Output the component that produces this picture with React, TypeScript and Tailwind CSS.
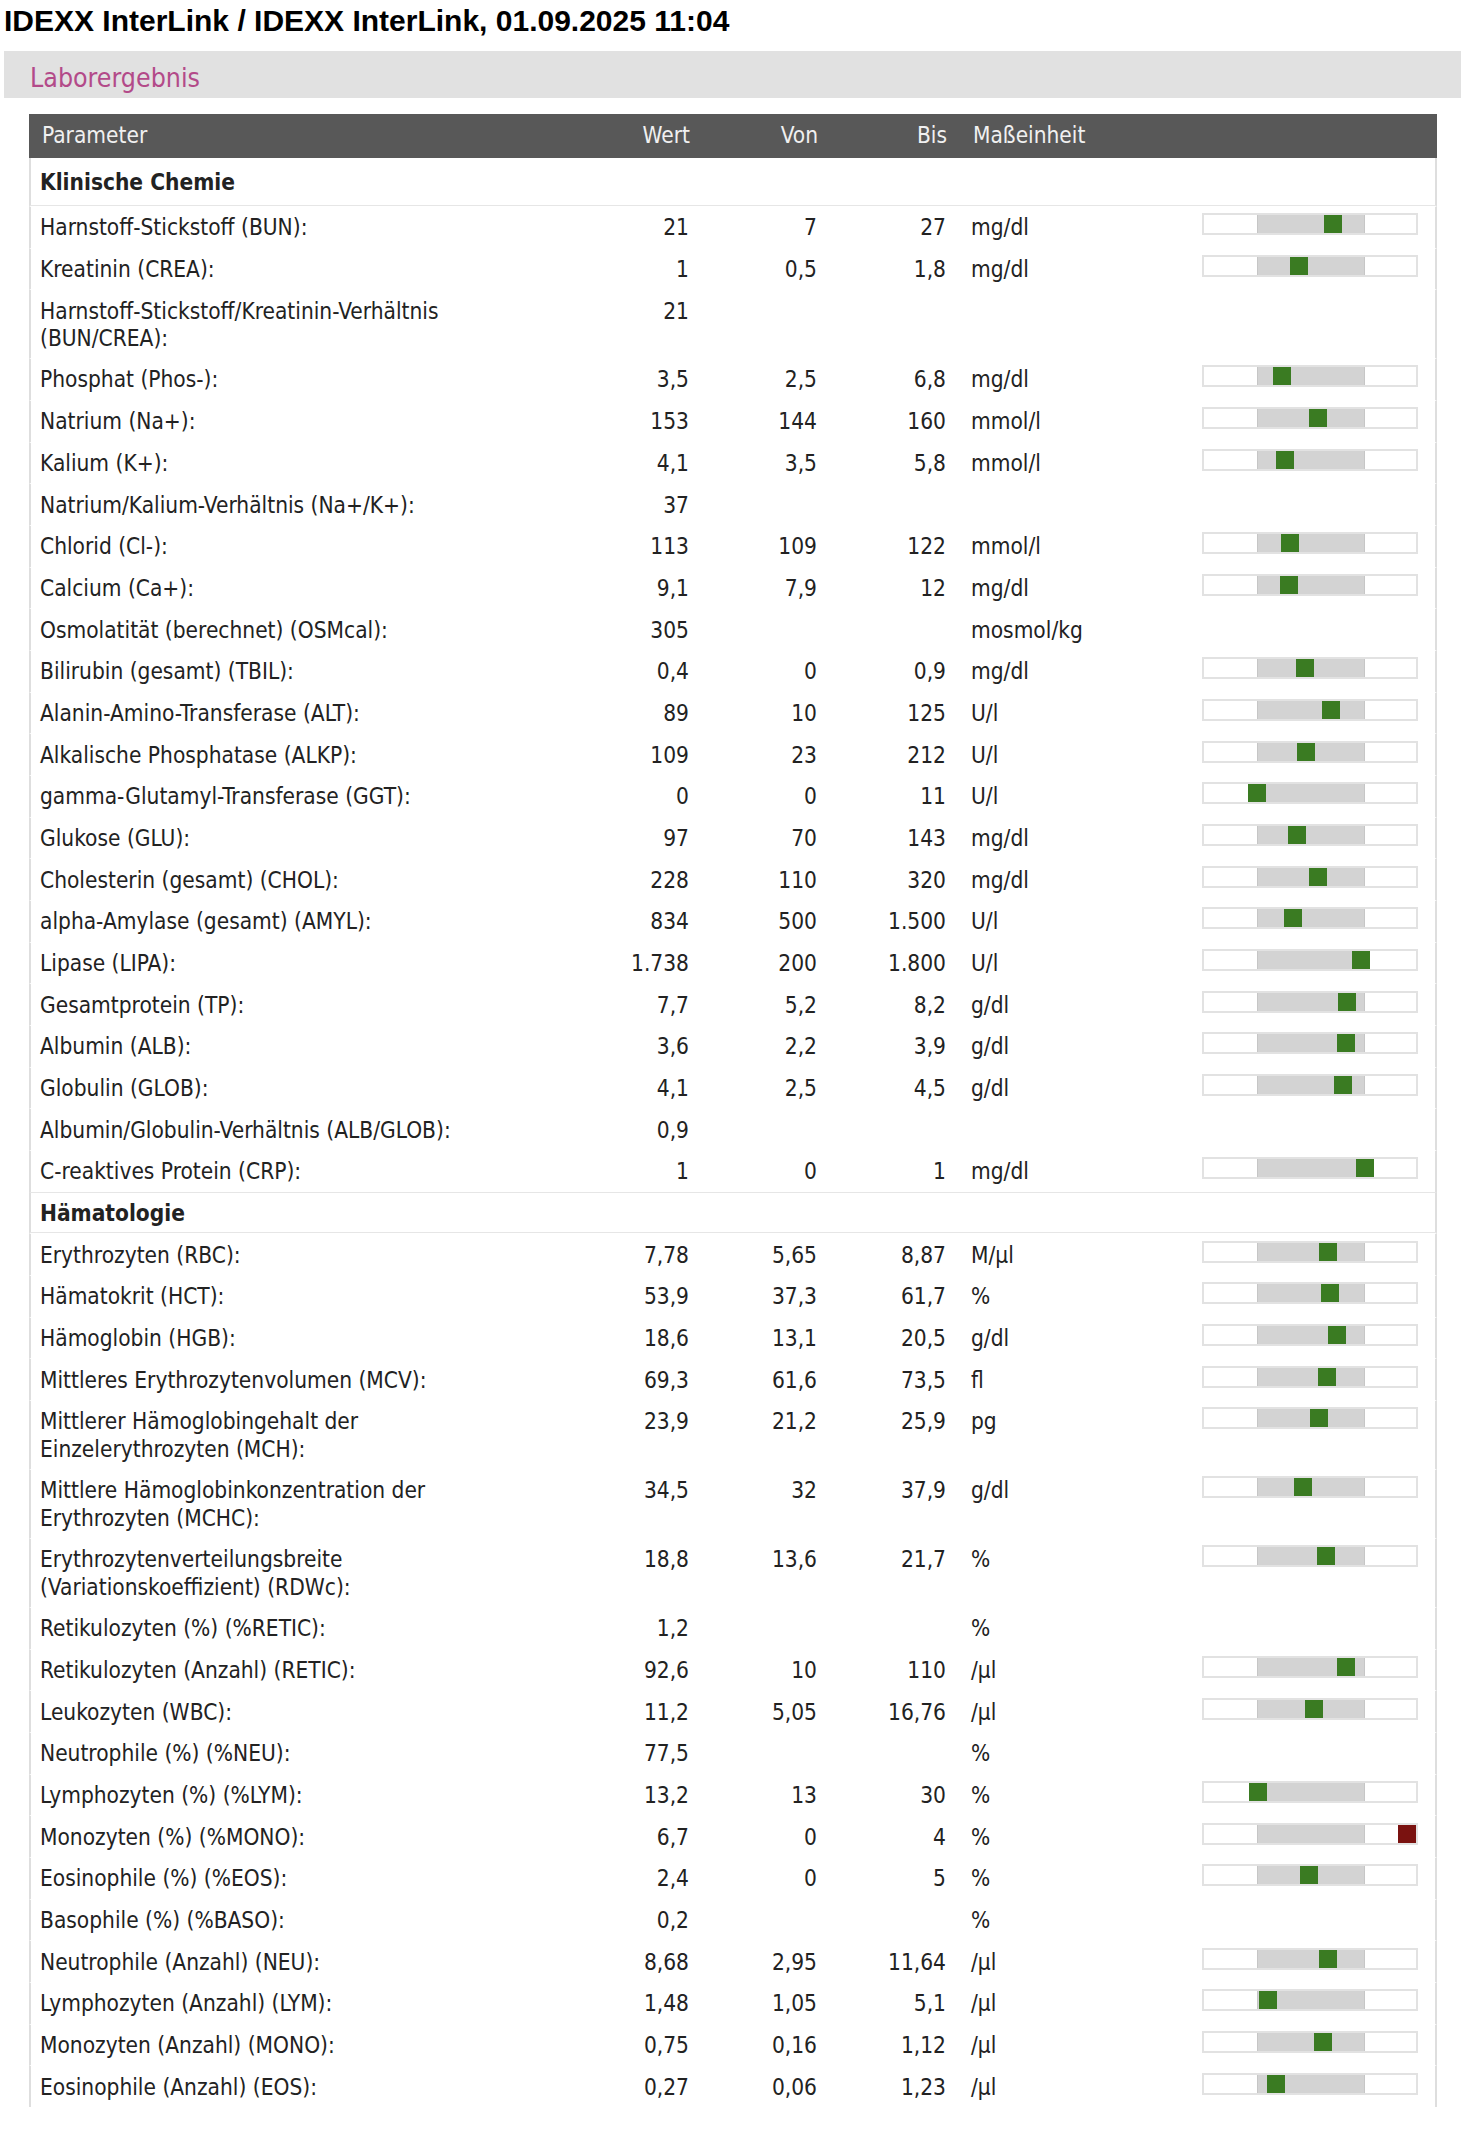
import React from 'react'

type Row =
  | { kind: 'section'; title: string; first?: boolean }
  | { kind: 'data'; name: string; value: string; from?: string; to?: string; unit?: string }

const rows: Row[] = [
  { kind: 'section', title: 'Klinische Chemie', first: true },
  { kind: 'data', name: 'Harnstoff-Stickstoff (BUN):', value: '21', from: '7', to: '27', unit: 'mg/dl' },
  { kind: 'data', name: 'Kreatinin (CREA):', value: '1', from: '0,5', to: '1,8', unit: 'mg/dl' },
  { kind: 'data', name: 'Harnstoff-Stickstoff/Kreatinin-Verhältnis\n(BUN/CREA):', value: '21' },
  { kind: 'data', name: 'Phosphat (Phos-):', value: '3,5', from: '2,5', to: '6,8', unit: 'mg/dl' },
  { kind: 'data', name: 'Natrium (Na+):', value: '153', from: '144', to: '160', unit: 'mmol/l' },
  { kind: 'data', name: 'Kalium (K+):', value: '4,1', from: '3,5', to: '5,8', unit: 'mmol/l' },
  { kind: 'data', name: 'Natrium/Kalium-Verhältnis (Na+/K+):', value: '37' },
  { kind: 'data', name: 'Chlorid (Cl-):', value: '113', from: '109', to: '122', unit: 'mmol/l' },
  { kind: 'data', name: 'Calcium (Ca+):', value: '9,1', from: '7,9', to: '12', unit: 'mg/dl' },
  { kind: 'data', name: 'Osmolatität (berechnet) (OSMcal):', value: '305', unit: 'mosmol/kg' },
  { kind: 'data', name: 'Bilirubin (gesamt) (TBIL):', value: '0,4', from: '0', to: '0,9', unit: 'mg/dl' },
  { kind: 'data', name: 'Alanin-Amino-Transferase (ALT):', value: '89', from: '10', to: '125', unit: 'U/l' },
  { kind: 'data', name: 'Alkalische Phosphatase (ALKP):', value: '109', from: '23', to: '212', unit: 'U/l' },
  { kind: 'data', name: 'gamma-Glutamyl-Transferase (GGT):', value: '0', from: '0', to: '11', unit: 'U/l' },
  { kind: 'data', name: 'Glukose (GLU):', value: '97', from: '70', to: '143', unit: 'mg/dl' },
  { kind: 'data', name: 'Cholesterin (gesamt) (CHOL):', value: '228', from: '110', to: '320', unit: 'mg/dl' },
  { kind: 'data', name: 'alpha-Amylase (gesamt) (AMYL):', value: '834', from: '500', to: '1.500', unit: 'U/l' },
  { kind: 'data', name: 'Lipase (LIPA):', value: '1.738', from: '200', to: '1.800', unit: 'U/l' },
  { kind: 'data', name: 'Gesamtprotein (TP):', value: '7,7', from: '5,2', to: '8,2', unit: 'g/dl' },
  { kind: 'data', name: 'Albumin (ALB):', value: '3,6', from: '2,2', to: '3,9', unit: 'g/dl' },
  { kind: 'data', name: 'Globulin (GLOB):', value: '4,1', from: '2,5', to: '4,5', unit: 'g/dl' },
  { kind: 'data', name: 'Albumin/Globulin-Verhältnis (ALB/GLOB):', value: '0,9' },
  { kind: 'data', name: 'C-reaktives Protein (CRP):', value: '1', from: '0', to: '1', unit: 'mg/dl' },
  { kind: 'section', title: 'Hämatologie' },
  { kind: 'data', name: 'Erythrozyten (RBC):', value: '7,78', from: '5,65', to: '8,87', unit: 'M/µl' },
  { kind: 'data', name: 'Hämatokrit (HCT):', value: '53,9', from: '37,3', to: '61,7', unit: '%' },
  { kind: 'data', name: 'Hämoglobin (HGB):', value: '18,6', from: '13,1', to: '20,5', unit: 'g/dl' },
  { kind: 'data', name: 'Mittleres Erythrozytenvolumen (MCV):', value: '69,3', from: '61,6', to: '73,5', unit: 'fl' },
  { kind: 'data', name: 'Mittlerer Hämoglobingehalt der\nEinzelerythrozyten (MCH):', value: '23,9', from: '21,2', to: '25,9', unit: 'pg' },
  { kind: 'data', name: 'Mittlere Hämoglobinkonzentration der\nErythrozyten (MCHC):', value: '34,5', from: '32', to: '37,9', unit: 'g/dl' },
  { kind: 'data', name: 'Erythrozytenverteilungsbreite\n(Variationskoeffizient) (RDWc):', value: '18,8', from: '13,6', to: '21,7', unit: '%' },
  { kind: 'data', name: 'Retikulozyten (%) (%RETIC):', value: '1,2', unit: '%' },
  { kind: 'data', name: 'Retikulozyten (Anzahl) (RETIC):', value: '92,6', from: '10', to: '110', unit: '/µl' },
  { kind: 'data', name: 'Leukozyten (WBC):', value: '11,2', from: '5,05', to: '16,76', unit: '/µl' },
  { kind: 'data', name: 'Neutrophile (%) (%NEU):', value: '77,5', unit: '%' },
  { kind: 'data', name: 'Lymphozyten (%) (%LYM):', value: '13,2', from: '13', to: '30', unit: '%' },
  { kind: 'data', name: 'Monozyten (%) (%MONO):', value: '6,7', from: '0', to: '4', unit: '%' },
  { kind: 'data', name: 'Eosinophile (%) (%EOS):', value: '2,4', from: '0', to: '5', unit: '%' },
  { kind: 'data', name: 'Basophile (%) (%BASO):', value: '0,2', unit: '%' },
  { kind: 'data', name: 'Neutrophile (Anzahl) (NEU):', value: '8,68', from: '2,95', to: '11,64', unit: '/µl' },
  { kind: 'data', name: 'Lymphozyten (Anzahl) (LYM):', value: '1,48', from: '1,05', to: '5,1', unit: '/µl' },
  { kind: 'data', name: 'Monozyten (Anzahl) (MONO):', value: '0,75', from: '0,16', to: '1,12', unit: '/µl' },
  { kind: 'data', name: 'Eosinophile (Anzahl) (EOS):', value: '0,27', from: '0,06', to: '1,23', unit: '/µl' },
]

const num = (s: string) => parseFloat(s.replace(/\./g, '').replace(',', '.'))

const grid = 'grid grid-cols-[499px_162px_126px_129px_203px_1fr]'

function RangeBar({ value, from, to }: { value: string; from: string; to: string }) {
  const v = num(value)
  const lo = num(from)
  const hi = num(to)
  const f = (v - lo) / (hi - lo)
  const inRange = v >= lo && v <= hi
  // inner width 212: white 53 | grey 108 | white 51, marker 18px
  const left = Math.min(194, Math.max(0, 53 + f * 108 - 9))

  return (
    <div className="relative -mt-px flex h-[22px] w-[216px] border-2 border-[#e2e2e2] bg-white">
      <div className="w-[53px]" />
      <div className="w-[108px] border-x border-[#c6c6c6] bg-[#d3d3d3]" />
      <div className="flex-1" />
      <div
        className={`absolute top-0 h-[18px] w-[18px] ${inRange ? 'bg-[#3a7b22]' : 'bg-[#7a1210]'}`}
        style={{ left }}
      />
    </div>
  )
}

export default function App() {
  return (
    <div className="min-h-[2150px] w-full bg-white text-[#222] font-['DejaVu_Sans_Condensed','DejaVu_Sans',sans-serif] [font-stretch:condensed]">
      <h1 className="pl-[4px] pt-[4px] font-['Liberation_Sans',Arial,sans-serif] text-[30px] font-bold leading-[34px] text-black [font-stretch:normal]">
        IDEXX InterLink / IDEXX InterLink, 01.09.2025 11:04
      </h1>

      <div className="mx-[4px] mr-[3px] mt-[13px] flex h-[47px] items-center bg-[#e1e1e1] pl-[26px] pt-[7px]">
        <span className="text-[26.5px] leading-none text-[#b34a89]">Laborergebnis</span>
      </div>

      <div className="ml-[29px] mt-[16px] w-[1408px] text-[22.5px] leading-[27.3px]">
        {/* Header */}
        <div className={`${grid} h-[44px] items-center border-x-2 border-[#585858] bg-[#585858] text-[#f0f0f0]`}>
          <div className="pl-[11px]">Parameter</div>
          <div className="pr-[2px] text-right">Wert</div>
          <div className="text-right">Von</div>
          <div className="text-right">Bis</div>
          <div className="pl-[26px]">Maßeinheit</div>
          <div />
        </div>

        {rows.map((r, i) =>
          r.kind === 'section' ? (
            <div
              key={i}
              className={
                r.first
                  ? 'border-x-2 border-b border-x-[#dedede] border-b-[#e6e6e6] pb-[8.7px] pl-[9px] pt-[11px] font-bold'
                  : 'border-x-2 border-y border-x-[#dedede] border-y-[#e6e6e6] pb-[5.2px] pl-[9px] pt-[7.2px] font-bold'
              }
            >
              {r.title}
            </div>
          ) : (
            <div
              key={i}
              className={`${grid} items-start border-x-2 border-t border-x-[#dedede] border-t-white pb-[6.2px] pt-[7.2px]`}
            >
              <div className="whitespace-pre-line pl-[9px]">{r.name}</div>
              <div className="pr-[3px] text-right">{r.value}</div>
              <div className="pr-[1px] text-right">{r.from ?? ''}</div>
              <div className="pr-[1px] text-right">{r.to ?? ''}</div>
              <div className="pl-[24px]">{r.unit ?? ''}</div>
              <div className="pl-[52px]">
                {r.from && r.to ? <RangeBar value={r.value} from={r.from} to={r.to} /> : null}
              </div>
            </div>
          )
        )}
      </div>
    </div>
  )
}
